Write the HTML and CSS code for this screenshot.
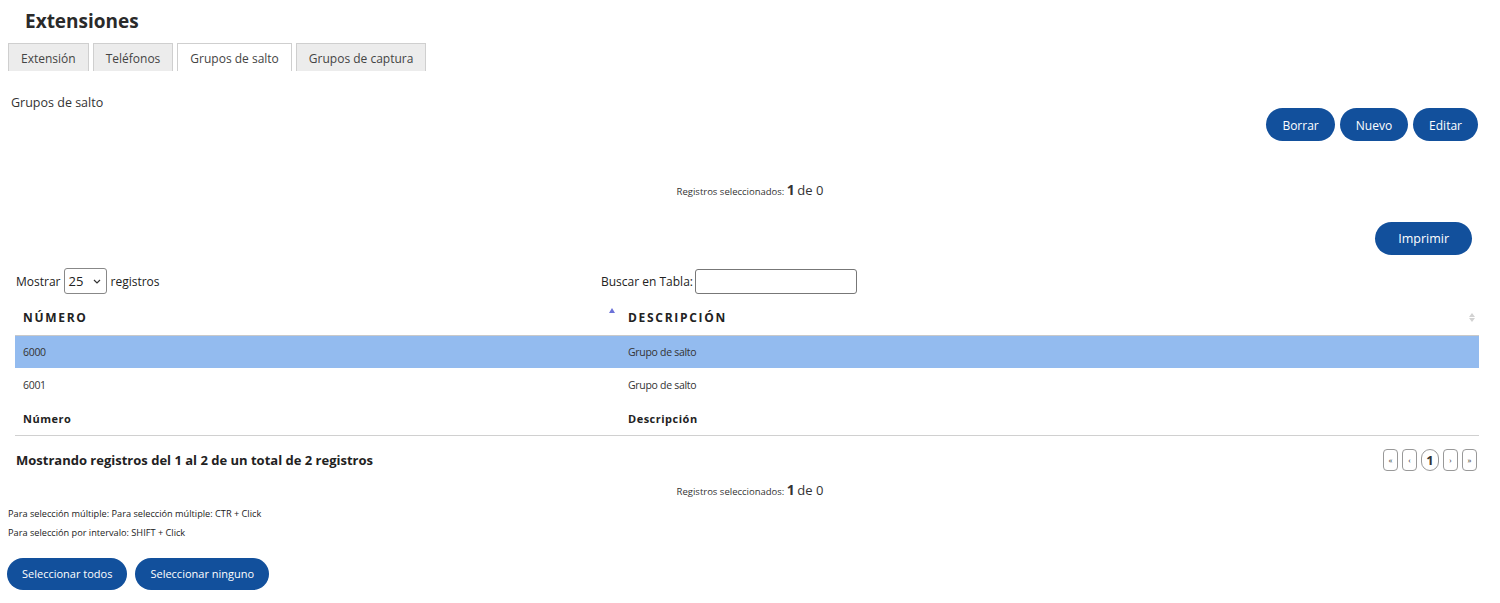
FILE: index.html
```html
<!DOCTYPE html>
<html lang="es">
<head>
<meta charset="utf-8">
<title>Extensiones</title>
<link rel="stylesheet" href="styles.css">
</head>
<body>
<h1 class="page-title">Extensiones</h1>
<nav class="tabs">
  <a class="tab">Extensión</a>
  <a class="tab">Teléfonos</a>
  <a class="tab tab-active">Grupos de salto</a>
  <a class="tab">Grupos de captura</a>
</nav>

<section class="panel">
  <div class="panel-head">
    <div class="panel-title">Grupos de salto</div>
    <div class="actions">
      <button class="btn">Borrar</button>
      <button class="btn">Nuevo</button>
      <button class="btn">Editar</button>
    </div>
  </div>

  <div class="selected-count sc-top">Registros seleccionados: <b>1</b> <span class="of">de 0</span></div>

  <div class="print-row"><button class="btn btn-print">Imprimir</button></div>

  <div class="table-tools">
    <label class="length">Mostrar
      <span class="select-wrap">
        <select class="length-select"><option>25</option></select>
        <svg class="chevron" width="8" height="5" viewBox="0 0 8 5"><path d="M1 1l3 3 3-3" fill="none" stroke="#333" stroke-width="1.2"/></svg>
      </span>
      registros</label>
    <label class="search">Buscar en Tabla: <input class="search-input" type="text"></label>
  </div>

  <table class="grid">
    <thead>
      <tr>
        <th class="col-num sorted">NÚMERO<span class="sort-up"></span></th>
        <th class="col-desc">DESCRIPCIÓN<span class="sort-both"><i class="up"></i><i class="down"></i></span></th>
      </tr>
    </thead>
    <tbody>
      <tr class="selected"><td>6000</td><td>Grupo de salto</td></tr>
      <tr><td>6001</td><td>Grupo de salto</td></tr>
    </tbody>
    <tfoot>
      <tr><th>Número</th><th>Descripción</th></tr>
    </tfoot>
  </table>

  <div class="table-foot">
    <div class="info">Mostrando registros del 1 al 2 de un total de 2 registros</div>
    <div class="pager">
      <span class="pg">«</span>
      <span class="pg">‹</span>
      <span class="pg pg-current">1</span>
      <span class="pg">›</span>
      <span class="pg">»</span>
    </div>
  </div>

  <div class="selected-count sc-bottom">Registros seleccionados: <b>1</b> <span class="of">de 0</span></div>

  <p class="hint">Para selección múltiple: Para selección múltiple: CTR + Click</p>
  <p class="hint">Para selección por intervalo: SHIFT + Click</p>

  <div class="select-actions">
    <button class="btn btn-wide">Seleccionar todos</button>
    <button class="btn btn-wide">Seleccionar ninguno</button>
  </div>
</section>
</body>
</html>
```

FILE: styles.css
```css
* { box-sizing: border-box; }

body {
  margin: 0;
  padding: 0 8px;
  font-family: "Open Sans", "Noto Sans", Arial, sans-serif;
  font-size: 12px;
  color: #222;
  background: #fff;
}

.page-title {
  margin: 0;
  padding: 9px 0 0 17px;
  height: 43px;
  font-size: 19px;
  font-weight: 700;
  color: #2a2a2a;
  line-height: 25px;
}

.tabs {
  display: flex;
  gap: 4px;
  height: 28px;
}

.tab {
  display: flex;
  align-items: center;
  padding: 2px 12px 0;
  height: 28px;
  background: #ececec;
  border: 1px solid #cfcfcf;
  border-bottom: none;
  color: #444;
  font-size: 12px;
}

.tab-active { background: #fff; }

.panel { padding-top: 22px; }

.panel-head {
  display: flex;
  justify-content: space-between;
  align-items: flex-start;
  padding-left: 3px;
}

.panel-title { font-size: 12.5px; color: #333; line-height: 20px; }

.actions {
  display: flex;
  gap: 5px;
  margin-top: 15px;
  margin-right: 14px;
}

.btn {
  height: 33px;
  padding: 1px 16px 0;
  border: none;
  border-radius: 17px;
  background: #12509c;
  color: #fff;
  font-family: inherit;
  font-size: 12px;
}

.selected-count {
  text-align: center;
  font-size: 9.5px;
  color: #333;
}
.selected-count b { font-size: 14px; font-weight: 700; }
.selected-count .of { font-size: 13px; }

.sc-top { margin-top: 39px; line-height: 20px; }

.print-row {
  display: flex;
  justify-content: flex-end;
  margin-top: 20px;
  padding-right: 20px;
}
.btn-print { padding: 0 23px; font-size: 12.5px; }

.table-tools {
  display: flex;
  align-items: center;
  margin-top: 13px;
  padding-left: 8px;
  height: 26px;
}

.length { width: 585px; display: flex; align-items: center; gap: 3px; }

.select-wrap { position: relative; display: inline-flex; margin-left: 1px; }

.length-select {
  appearance: none;
  -webkit-appearance: none;
  width: 43px;
  height: 26px;
  border: 1px solid #888;
  border-radius: 3px;
  font-family: inherit;
  font-size: 13px;
  color: #222;
  background: #fff;
  padding: 0 0 0 3px;
}

.chevron {
  position: absolute;
  right: 6px;
  top: 11px;
  pointer-events: none;
}

.search { display: flex; align-items: center; gap: 2px; }

.search-input {
  width: 162px;
  height: 25px;
  border: 1px solid #777;
  border-radius: 3px;
}

.grid {
  margin: 6px 0 0 7px;
  width: 1464px;
  border-collapse: collapse;
  font-size: 11px;
}

.grid th {
  text-align: left;
  font-weight: 700;
  color: #222;
  padding: 0 8px;
}

.grid thead th {
  position: relative;
  height: 35px;
  font-size: 12px;
  letter-spacing: 1.7px;
  border-bottom: 1px solid #c9c9c9;
  padding-top: 1px;
}

.col-num { width: 605px; }

.sort-up {
  position: absolute;
  right: 5px;
  top: 8px;
  width: 0;
  height: 0;
  border-left: 3px solid transparent;
  border-right: 3px solid transparent;
  border-bottom: 5px solid #6c72d8;
}

.sort-both {
  position: absolute;
  right: 4px;
  top: 13px;
  display: flex;
  flex-direction: column;
  gap: 1px;
}
.sort-both i {
  width: 0;
  height: 0;
  border-left: 3px solid transparent;
  border-right: 3px solid transparent;
}
.sort-both .up { border-bottom: 4px solid #d2d2d2; }
.sort-both .down { border-top: 4px solid #d2d2d2; }

.grid td {
  height: 33px;
  padding: 0 8px;
  color: #333;
  font-size: 10.5px;
  letter-spacing: -0.3px;
}

.grid tr.selected td { background: #93bbef; }

.grid tfoot th {
  height: 34px;
  font-size: 11px;
  letter-spacing: 0.5px;
  border-bottom: 1px solid #d0d0d0;
  padding-top: 2px;
}

.table-foot {
  display: flex;
  justify-content: space-between;
  align-items: center;
  margin: 13px 0 0 8px;
  padding-right: 15px;
}

.info { font-weight: 700; font-size: 13px; color: #222; }

.pager { display: flex; gap: 4px; align-items: center; }

.pg {
  display: flex;
  align-items: center;
  justify-content: center;
  width: 15px;
  height: 22px;
  border: 1px solid #999;
  border-radius: 4px;
  font-size: 8px;
  color: #333;
}

.pg-current {
  width: 18px;
  border-radius: 9px;
  font-size: 13px;
  font-weight: 700;
}

.sc-bottom { margin-top: 9px; line-height: 20px; }

.hint {
  margin: 0;
  font-size: 9.2px;
  line-height: 19px;
  color: #222;
}
.sc-bottom + .hint { margin-top: 2px; }

.select-actions {
  display: flex;
  gap: 8px;
  margin-top: 16px;
  margin-left: -1px;
}

.btn-wide { height: 32px; font-size: 11px; padding: 0 15px; }
```
